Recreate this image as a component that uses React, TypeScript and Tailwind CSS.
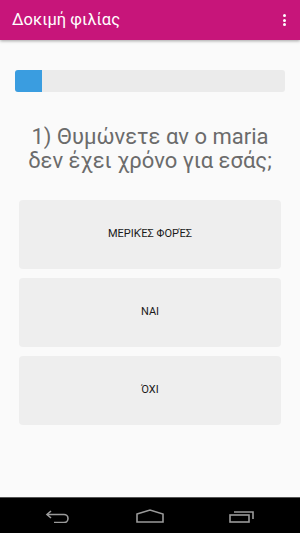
const answers = ["ΜΕΡΙΚΈΣ ΦΟΡΈΣ", "ΝΑΙ", "ΌΧΙ"];

export default function App() {
  return (
    <div
      className="w-[300px] h-[533px] flex flex-col bg-[#fafafa] overflow-hidden"
      style={{ fontFamily: "Roboto, 'Noto Sans', sans-serif" }}
    >
      <header className="h-[40px] shrink-0 bg-[#c7157a] flex items-center justify-between pl-[12px] pr-[14px] shadow-[0_1px_3px_rgba(0,0,0,0.35)] z-10">
        <h1 className="text-white text-[16.5px] leading-none">Δοκιμή φιλίας</h1>
        <div className="flex flex-col gap-[1.5px]">
          <span className="w-[3px] h-[3px] rounded-full bg-white" />
          <span className="w-[3px] h-[3px] rounded-full bg-white" />
          <span className="w-[3px] h-[3px] rounded-full bg-white" />
        </div>
      </header>

      <main className="flex-1 flex flex-col px-[15px] pt-[30px]">
        <div className="h-[22px] w-full rounded-[3px] bg-[#ebebeb] overflow-hidden">
          <div className="h-full w-[27px] bg-[#3a9de0]" />
        </div>

        <p className="mt-[33px] text-center text-[22px] leading-[24px] text-[#6b6b6b]">
          1) Θυμώνετε αν ο maria
          <br />
          δεν έχει χρόνο για εσάς;
        </p>

        <div className="mt-[27px] px-[4px] flex flex-col gap-[9px]">
          {answers.map((a) => (
            <button
              key={a}
              className="h-[69px] w-full rounded-[4px] bg-[#eeeeee] text-[11px] text-[#1a1a1a] flex items-center justify-center"
            >
              {a}
            </button>
          ))}
        </div>
      </main>

      <nav className="h-[36px] shrink-0 bg-black border-t border-[#555] flex items-center justify-center gap-[65px]">
        <svg width="26" height="14" viewBox="0 0 26 14" fill="none" stroke="#9a9a9a" strokeWidth="1.6">
          <path d="M6 2 L2 5.5 L6 9" />
          <path d="M2 5.5 H19 a4 4 0 0 1 0 8 H9" />
        </svg>
        <svg width="28" height="14" viewBox="0 0 28 14" fill="none" stroke="#9a9a9a" strokeWidth="1.6">
          <path d="M1 5 L14 1 L27 5 V13 H1 Z" />
        </svg>
        <svg width="26" height="14" viewBox="0 0 26 14" fill="none" stroke="#9a9a9a" strokeWidth="1.6">
          <rect x="1" y="6" width="19" height="7" />
          <path d="M5 3 H24 V10" />
        </svg>
      </nav>
    </div>
  );
}
